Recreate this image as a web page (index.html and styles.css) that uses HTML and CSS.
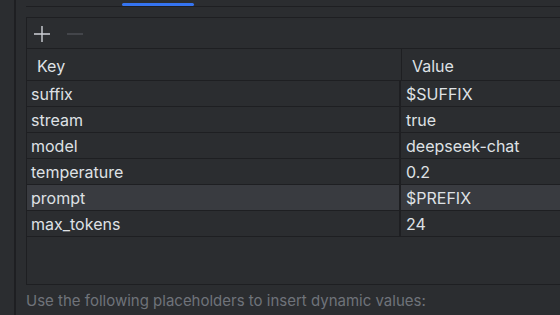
FILE: index.html
```html
<!DOCTYPE html>
<html lang="en">
<head>
    <meta charset="UTF-8">
    <meta name="viewport" content="width=device-width, initial-scale=1.0">
    <title>Request Parameters</title>
    <link rel="stylesheet" href="styles.css">
</head>
<body>
    <div class="side-strip"></div>
    <div class="content">
        <div class="tabs">
            <div class="tab-indicator"></div>
        </div>
        <div class="table-panel">
            <div class="toolbar">
                <svg class="tool-icon" width="18" height="18" viewBox="0 0 18 18">
                    <path d="M9 1v16M1 9h16" stroke="#ced0d6" stroke-width="1.4" fill="none"/>
                </svg>
                <svg class="tool-icon" width="18" height="18" viewBox="0 0 18 18">
                    <path d="M1 9h16" stroke="#4e5157" stroke-width="1.4" fill="none"/>
                </svg>
            </div>
            <div class="table-header">
                <div class="cell head-key">Key</div>
                <div class="cell head-value">Value</div>
            </div>
            <div class="rows">
                <div class="row"><div class="cell key">suffix</div><div class="cell value">$SUFFIX</div></div>
                <div class="row"><div class="cell key">stream</div><div class="cell value">true</div></div>
                <div class="row"><div class="cell key">model</div><div class="cell value">deepseek-chat</div></div>
                <div class="row"><div class="cell key">temperature</div><div class="cell value">0.2</div></div>
                <div class="row selected"><div class="cell key">prompt</div><div class="cell value">$PREFIX</div></div>
                <div class="row"><div class="cell key">max_tokens</div><div class="cell value">24</div></div>
            </div>
        </div>
        <p class="hint">Use the following placeholders to insert dynamic values:</p>
    </div>
</body>
</html>
```

FILE: styles.css
```css
* {
    box-sizing: border-box;
}
body {
    margin: 0;
    background-color: #2b2d30;
    color: #dfe1e5;
    font-family: Inter, 'Noto Sans', sans-serif;
    font-size: 16px;
    display: flex;
    height: 315px;
    overflow: hidden;
}
.side-strip {
    width: 16px;
    flex-shrink: 0;
    border-right: 2px solid #1e1f22;
}
.content {
    flex: 1;
    padding-left: 10px;
    min-width: 0;
}
.tabs {
    height: 7px;
    border-bottom: 1px solid #1e1f22;
    position: relative;
}
.tab-indicator {
    position: absolute;
    left: 96px;
    top: 3px;
    width: 72px;
    height: 3px;
    border-radius: 2px;
    background-color: #3574f0;
}
.table-panel {
    margin-top: 10px;
    width: 560px;
    height: 268px;
    border: 1px solid #1e1f22;
}
.toolbar {
    height: 31px;
    display: flex;
    align-items: center;
    gap: 15px;
    padding-left: 6px;
    padding-top: 1px;
    border-bottom: 1px solid #1e1f22;
}
.tool-icon {
    display: block;
}
.table-header {
    display: grid;
    grid-template-columns: 374px 1fr;
    height: 32px;
    border-bottom: 1px solid #1e1f22;
}
.table-header .cell {
    padding-left: 10px;
    padding-top: 5px;
    line-height: 25px;
}
.head-value {
    border-left: 1px solid #1e1f22;
}
.row {
    display: grid;
    grid-template-columns: 372px 1fr;
    height: 26px;
    border-bottom: 1px solid #1e1f22;
}
.row .cell {
    padding-left: 4px;
    padding-top: 1px;
    line-height: 24px;
}
.row .value {
    border-left: 2px solid #1e1f22;
    padding-left: 5px;
}
.row.selected {
    background-color: #393b40;
}
.hint {
    margin: 6px 0 0;
    color: #6f737a;
    font-size: 15px;
}
```
